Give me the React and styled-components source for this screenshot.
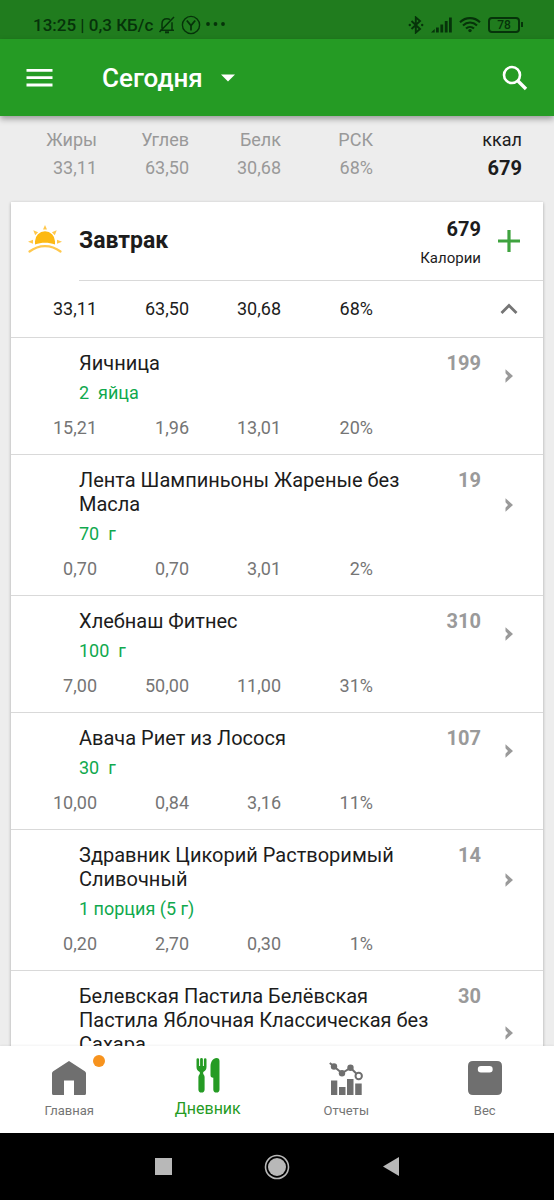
import React from "react";
import styled, { createGlobalStyle } from "styled-components";

const GlobalStyle = createGlobalStyle`
  *, *::before, *::after { box-sizing: border-box; }
  body {
    margin: 0;
    background: #ededed;
    color: #1c1c1c;
    font-family: Roboto, "Noto Sans", sans-serif;
  }
  button { font: inherit; color: inherit; border: 0; padding: 0; background: none; cursor: pointer; }
  a { color: inherit; text-decoration: none; }
  ul, h1, h2, h3, p { margin: 0; padding: 0; list-style: none; font-weight: 400; }
  svg { display: block; flex: none; }
`;

const Screen = styled.div`
  display: flex;
  flex-direction: column;
  height: 100vh;
`;

const StatusBar = styled.div`
  display: flex;
  align-items: center;
  justify-content: space-between;
  height: 39px;
  flex: none;
  padding: 10px 31px 0 33px;
  background: #207c1e;
  color: #06330a;
`;

const StatusGroup = styled.div`
  display: flex;
  align-items: center;
  gap: ${({ $gap }) => $gap}px;
`;

const StatusText = styled.span`
  font-size: 17px;
  line-height: 20px;
  font-weight: 500;
`;

const AppBar = styled.header`
  display: flex;
  align-items: center;
  height: 77px;
  flex: none;
  padding: 0 26px;
  background: #259b24;
  color: #fff;
  box-shadow: 0 3px 6px rgba(0, 0, 0, 0.35);
  z-index: 1;
`;

const DayButton = styled.button`
  display: flex;
  align-items: center;
  gap: 18px;
  margin-left: 49px;
  margin-right: auto;
  font-size: 26px;
  line-height: 32px;
  font-weight: 500;
`;

const Content = styled.main`
  flex: 1;
  min-height: 0;
  overflow-y: auto;
  scrollbar-width: none;
`;

const Summary = styled.table`
  width: 100%;
  table-layout: fixed;
  border-collapse: collapse;
  margin: 10px 0 20px;
  font-size: 18px;
  line-height: 28px;
  color: #999;

  th, td { padding: 0; text-align: right; font-weight: 400; }
  th:first-child { width: 97px; }
  th { width: 92px; }
  th:last-child { width: auto; }
  th:last-child, td:last-child { padding-right: 32px; color: #1c1c1c; }
  td:last-child { font-size: 20px; font-weight: 700; }
`;

const Card = styled.section`
  margin: 0 11px;
  background: #fff;
  box-shadow: 0 1px 3px rgba(0, 0, 0, 0.3);
`;

const MealHeader = styled.header`
  display: flex;
  align-items: center;
  height: 78px;
  padding-left: 17px;
`;

const MealTitle = styled.h2`
  flex: 1;
  margin-left: 17px;
  font-size: 23px;
  line-height: 28px;
  font-weight: 700;
`;

const MealEnergy = styled.div`
  display: flex;
  flex-direction: column;
  align-items: flex-end;
  gap: 3px;
  padding-top: 3px;
  font-size: 15px;
  line-height: 24px;

  strong { font-size: 20px; line-height: 28px; font-weight: 700; }
`;

const Action = styled.span`
  display: flex;
  justify-content: center;
  align-items: center;
  width: 62px;
  padding-right: 6px;
  color: ${({ $tone }) => $tone};
`;

const Totals = styled.div`
  display: flex;
  align-items: center;
  justify-content: space-between;
  height: 57px;
  border-bottom: 1px solid #d9d9d9;
`;

const Divider = styled.div`
  height: 1px;
  margin-left: 68px;
  background: #d9d9d9;
`;

const Nutrients = styled.div`
  display: grid;
  grid-template-columns: 86px repeat(3, 92px);
  font-size: 18px;
  line-height: 22px;
  text-align: right;
  color: ${({ $strong }) => ($strong ? "#1c1c1c" : "#757575")};
`;

const Entry = styled.a`
  display: flex;
  flex-direction: column;
  gap: 3px;
  padding-bottom: 15px;
  border-bottom: 1px solid #d9d9d9;
`;

const EntryTop = styled.div`
  display: flex;
  padding-left: 68px;
`;

const EntryText = styled.div`
  flex: 1;
  display: flex;
  flex-direction: column;
  gap: 7px;
  padding: 13px 0 10px;
`;

const EntryTitle = styled.h3`
  font-size: 20px;
  line-height: 24px;
`;

const Portion = styled.p`
  font-size: 18px;
  line-height: 22px;
  white-space: pre;
  color: #10a94e;
`;

const EntryEnergy = styled.span`
  width: 40px;
  padding-top: 13px;
  font-size: 20px;
  line-height: 24px;
  font-weight: 700;
  text-align: right;
  color: #9a9a9a;
`;

const TabBar = styled.nav`
  display: grid;
  grid-template-columns: repeat(4, 1fr);
  height: 87px;
  flex: none;
  background: #fff;
  box-shadow: 0 -1px 2px rgba(0, 0, 0, 0.05);
  z-index: 1;
`;

const Tab = styled.a`
  display: flex;
  flex-direction: column;
  align-items: center;
  gap: 8px;
  padding-top: ${({ $active }) => ($active ? 12 : 15)}px;
  font-size: ${({ $active }) => ($active ? 16 : 13)}px;
  line-height: 16px;
  color: ${({ $active }) => ($active ? "#259b24" : "#757575")};
`;

const IconWrap = styled.span`
  position: relative;
  color: ${({ $active }) => ($active ? "#259b24" : "#6f6f6f")};
`;

const Dot = styled.span`
  position: absolute;
  top: -6px;
  right: -19px;
  width: 12px;
  height: 12px;
  border-radius: 50%;
  background: #f7931e;
`;

const SystemBar = styled.div`
  display: grid;
  grid-template-columns: repeat(3, 114px);
  justify-content: center;
  height: 67px;
  flex: none;
  background: #000;
  color: #b8b8b8;
`;

const SystemButton = styled.button`
  display: flex;
  align-items: center;
  justify-content: center;
`;

const MutedBell = () => (
  <svg width="18" height="18" viewBox="0 0 18 18" fill="none" stroke="currentColor" strokeWidth="1.5">
    <path d="M2 14.2h14M4 12.5V7.8C4 4.8 6 2.7 9 2.7c1.2 0 2.2.3 3 .9M14 6.2v8M16 1L1.500 16" />
    <path d="M7 16.300h4" strokeWidth="2" />
  </svg>
);

const YBadge = () => (
  <svg width="20" height="20" viewBox="0 0 20 20" fill="none" stroke="currentColor" strokeWidth="1.4">
    <circle cx="10" cy="10" r="8.600" />
    <path d="M5.800 5.500l4.200 5 4.200-5M10 10.500v5" strokeWidth="1.800" />
  </svg>
);

const MoreDots = () => (
  <svg width="20" height="8" viewBox="0 0 20 8" fill="currentColor">
    <circle cx="2" cy="3" r="1.900" /><circle cx="9.500" cy="3" r="1.900" /><circle cx="17" cy="3" r="1.900" />
  </svg>
);

const Bluetooth = () => (
  <svg width="16" height="18" viewBox="0 0 16 18" fill="none" stroke="currentColor" strokeWidth="1.900">
    <path d="M3.500 5l8.500 8-4.200 3.600V1.400L12 5l-8.500 8" />
    <circle cx="1.800" cy="9" r="1.200" fill="currentColor" stroke="none" /><circle cx="14.200" cy="9" r="1.200" fill="currentColor" stroke="none" />
  </svg>
);

const Signal = () => (
  <svg width="21" height="16" viewBox="0 0 21 16" fill="currentColor">
    <path d="M0 15.500L3.700 12v3.500zM5 10.500h2.800v5H5zM9.400 7.500h2.800v8H9.400zM13.800 4h2.800v11.500h-2.800zM18 .5h2.800v15H18z" />
  </svg>
);

const Wifi = () => (
  <svg width="22" height="17" viewBox="0 0 22 17" fill="none" stroke="currentColor" strokeWidth="2.100">
    <path d="M1 6.200c5.700-5.500 14.300-5.500 20 0M4 9.400c4-3.800 10-3.800 14 0M7 12.500c2.300-2.100 5.700-2.100 8 0" />
    <circle cx="11" cy="14.600" r="1.700" fill="currentColor" stroke="none" />
  </svg>
);

const BatteryIcon = styled.span`
  display: flex;
  align-items: center;

  b {
    width: 32px;
    height: 16px;
    border: 2px solid currentColor;
    border-radius: 4px;
    font-size: 12px;
    line-height: 13px;
    font-weight: 500;
    text-align: center;
  }
  &::after {
    content: "";
    width: 2px;
    height: 5px;
    margin-left: 1px;
    background: currentColor;
  }
`;

const MenuIcon = () => (
  <svg width="27" height="20" viewBox="0 0 27 20" fill="currentColor">
    <path d="M.500 1h26v2.800H.500zM.500 8.300h26v2.800H.500zM.500 15.600h26v2.800H.500z" />
  </svg>
);

const CaretIcon = () => (
  <svg width="14" height="8" viewBox="0 0 14 8" fill="currentColor"><path d="M0 .500h14L7 7.500z" /></svg>
);

const SearchIcon = () => (
  <svg width="26" height="26" viewBox="0 0 26 26" fill="none" stroke="currentColor">
    <circle cx="10" cy="10" r="8" strokeWidth="2.600" />
    <path d="M15.500 15.500l8.500 8.500" strokeWidth="3.400" />
  </svg>
);

const Sunrise = () => (
  <svg width="34" height="32" viewBox="0 0 34 32" fill="#fdb913">
    <path d="M7 19.500v-3.200a10 10 0 0 1 20 0v3.200c-6.500-2.200-13.500-2.200-20 0z" />
    <path d="M1.500 26.500c9.500-7.200 21.500-7.200 31 0" fill="none" stroke="#ffc84d" strokeWidth="2.200" strokeLinecap="round" />
    <path d="M17 0l2 4.500h-4zM5.300 5.300l4.800 2-2.900 2.900zM28.700 5.300l-4.800 2 2.900 2.900zM0 16.800l5-2v4zM34 16.800l-5-2v4z" fill="#ffc84d" />
  </svg>
);

const PlusIcon = () => (
  <svg width="22" height="22" viewBox="0 0 22 22" stroke="currentColor" strokeWidth="3.200"><path d="M0 11h22M11 0v22" /></svg>
);

const ChevronUp = () => (
  <svg width="18" height="12" viewBox="0 0 18 12" fill="none" stroke="currentColor" strokeWidth="2.800"><path d="M1.500 10L9 2.500l7.500 7.500" /></svg>
);

const ChevronRight = () => (
  <svg width="8" height="14" viewBox="0 0 8 14" fill="currentColor"><path d="M.500 .200L8 7 .500 13.800V9.700L3 7 .500 4.300z" /></svg>
);

const HomeIcon = () => (
  <svg width="34" height="34" viewBox="0 0 34 34" fill="currentColor">
    <path d="M17 0l15.800 10.200q1.200.8 1.200 2V32.500q0 1.500-1.500 1.500H22V19.500H12V34H1.500Q0 34 0 32.500V12.200q0-1.200 1.200-2z" />
  </svg>
);

const CutleryIcon = () => (
  <svg width="24" height="35" viewBox="0 0 24 35" fill="currentColor">
    <path d="M.500 1.500a1.300 1.300 0 0 1 2.600 0V8h1V1.500a1.400 1.400 0 0 1 2.800 0V8h1V1.500a1.300 1.300 0 0 1 2.600 0V9c0 2.600-1.300 4-2.900 4.800-.6.300-.6 2 0 2.600.7.700 1 1.500 1 2.600V31.500a3.100 3.100 0 0 1-6.200 0V19c0-1.100.4-1.900 1-2.600.7-.6.700-2.300 0-2.600C1.800 13 .500 11.600.500 9z" />
    <path d="M23.500 3.200V31.500a3.100 3.100 0 0 1-6.200 0V19.700c-2-.2-2.800-.8-2.800-2.700V8.500C14.500 3.800 17 0 20.500 0c2 0 3 1.200 3 3.200z" />
  </svg>
);

const ReportsIcon = () => (
  <svg width="34" height="34" viewBox="0 0 34 34" fill="currentColor">
    <path d="M2 19.500h6.300V34H2zM10 26h6.500v8H10zM18 18h6.500v16H18zM26.200 22.500h6.500V34h-6.500z" />
    <path d="M.800 2L5 5.500l8 6.800 8.500-5.600 8 8" fill="none" stroke="currentColor" strokeWidth="2" />
    <circle cx="5" cy="5.500" r="3.200" /><circle cx="13" cy="12.300" r="3.200" /><circle cx="21.500" cy="6.800" r="3.200" />
    <circle cx="29.700" cy="15" r="3.200" fill="#fff" stroke="currentColor" strokeWidth="2" />
  </svg>
);

const ScaleIcon = () => (
  <svg width="34" height="34" viewBox="0 0 34 34" fill="currentColor" fillRule="evenodd">
    <path d="M5 0h24q5 0 5 5v24q0 5-5 5H5q-5 0-5-5V5q0-5 5-5zM13 5a3.200 3.200 0 0 0 0 6.400h8.500a3.200 3.200 0 0 0 0-6.400z" />
  </svg>
);

const ENTRIES = [
  { title: "Яичница", portion: "2  яйца", kcal: "199", values: ["15,21", "1,96", "13,01", "20%"] },
  { title: "Лента Шампиньоны Жареные без Масла", portion: "70  г", kcal: "19", values: ["0,70", "0,70", "3,01", "2%"] },
  { title: "Хлебнаш Фитнес", portion: "100  г", kcal: "310", values: ["7,00", "50,00", "11,00", "31%"] },
  { title: "Авача Риет из Лосося", portion: "30  г", kcal: "107", values: ["10,00", "0,84", "3,16", "11%"] },
  { title: "Здравник Цикорий Растворимый Сливочный", portion: "1 порция (5 г)", kcal: "14", values: ["0,20", "2,70", "0,30", "1%"] },
  { title: "Белевская Пастила Белёвская Пастила Яблочная Классическая без Сахара", portion: "", kcal: "30", values: [] },
];

const TABS = [
  { label: "Главная", icon: <HomeIcon />, dot: true },
  { label: "Дневник", icon: <CutleryIcon />, active: true },
  { label: "Отчеты", icon: <ReportsIcon /> },
  { label: "Вес", icon: <ScaleIcon /> },
];

const NutrientRow = ({ values, strong }) => (
  <Nutrients $strong={strong}>
    {values.map((value, i) => <span key={i}>{value}</span>)}
  </Nutrients>
);

const FoodEntry = ({ title, portion, kcal, values }) => (
  <li>
    <Entry href="#food">
      <EntryTop>
        <EntryText>
          <EntryTitle>{title}</EntryTitle>
          <Portion>{portion || "\u00a0"}</Portion>
        </EntryText>
        <EntryEnergy>{kcal}</EntryEnergy>
        <Action $tone="#9a9a9a"><ChevronRight /></Action>
      </EntryTop>
      <NutrientRow values={values} />
    </Entry>
  </li>
);

export default function App() {
  return (
    <Screen>
      <GlobalStyle />
      <StatusBar>
        <StatusGroup $gap={5}>
          <StatusText>13:25 | 0,3 КБ/с</StatusText>
          <MutedBell />
          <YBadge />
          <MoreDots />
        </StatusGroup>
        <StatusGroup $gap={7}>
          <Bluetooth />
          <Signal />
          <Wifi />
          <BatteryIcon><b>78</b></BatteryIcon>
        </StatusGroup>
      </StatusBar>
      <AppBar>
        <button aria-label="Меню"><MenuIcon /></button>
        <DayButton>Сегодня<CaretIcon /></DayButton>
        <button aria-label="Поиск"><SearchIcon /></button>
      </AppBar>
      <Content>
        <Summary>
          <thead>
            <tr><th>Жиры</th><th>Углев</th><th>Белк</th><th>РСК</th><th>ккал</th></tr>
          </thead>
          <tbody>
            <tr><td>33,11</td><td>63,50</td><td>30,68</td><td>68%</td><td>679</td></tr>
          </tbody>
        </Summary>
        <Card>
          <MealHeader>
            <Sunrise />
            <MealTitle>Завтрак</MealTitle>
            <MealEnergy><strong>679</strong>Калории</MealEnergy>
            <Action as="button" aria-label="Добавить" $tone="#3fa33f"><PlusIcon /></Action>
          </MealHeader>
          <Divider />
          <Totals>
            <NutrientRow strong values={["33,11", "63,50", "30,68", "68%"]} />
            <Action as="button" aria-label="Свернуть" $tone="#757575"><ChevronUp /></Action>
          </Totals>
          <ul>
            {ENTRIES.map((entry) => <FoodEntry key={entry.title} {...entry} />)}
          </ul>
        </Card>
      </Content>
      <TabBar>
        {TABS.map(({ label, icon, active, dot }) => (
          <Tab key={label} href="#tab" $active={active}>
            <IconWrap $active={active}>{icon}{dot && <Dot />}</IconWrap>
            {label}
          </Tab>
        ))}
      </TabBar>
      <SystemBar>
        <SystemButton aria-label="Недавние">
          <svg width="17" height="17" viewBox="0 0 17 17" fill="currentColor"><path d="M0 0h17v17H0z" /></svg>
        </SystemButton>
        <SystemButton aria-label="Домой">
          <svg width="26" height="26" viewBox="0 0 26 26">
            <circle cx="13" cy="13" r="11.500" fill="none" stroke="currentColor" strokeWidth="1.600" />
            <circle cx="13" cy="13" r="9" fill="currentColor" />
          </svg>
        </SystemButton>
        <SystemButton aria-label="Назад">
          <svg width="16" height="19" viewBox="0 0 16 19" fill="currentColor"><path d="M0 9.500L16 0v19z" /></svg>
        </SystemButton>
      </SystemBar>
    </Screen>
  );
}
